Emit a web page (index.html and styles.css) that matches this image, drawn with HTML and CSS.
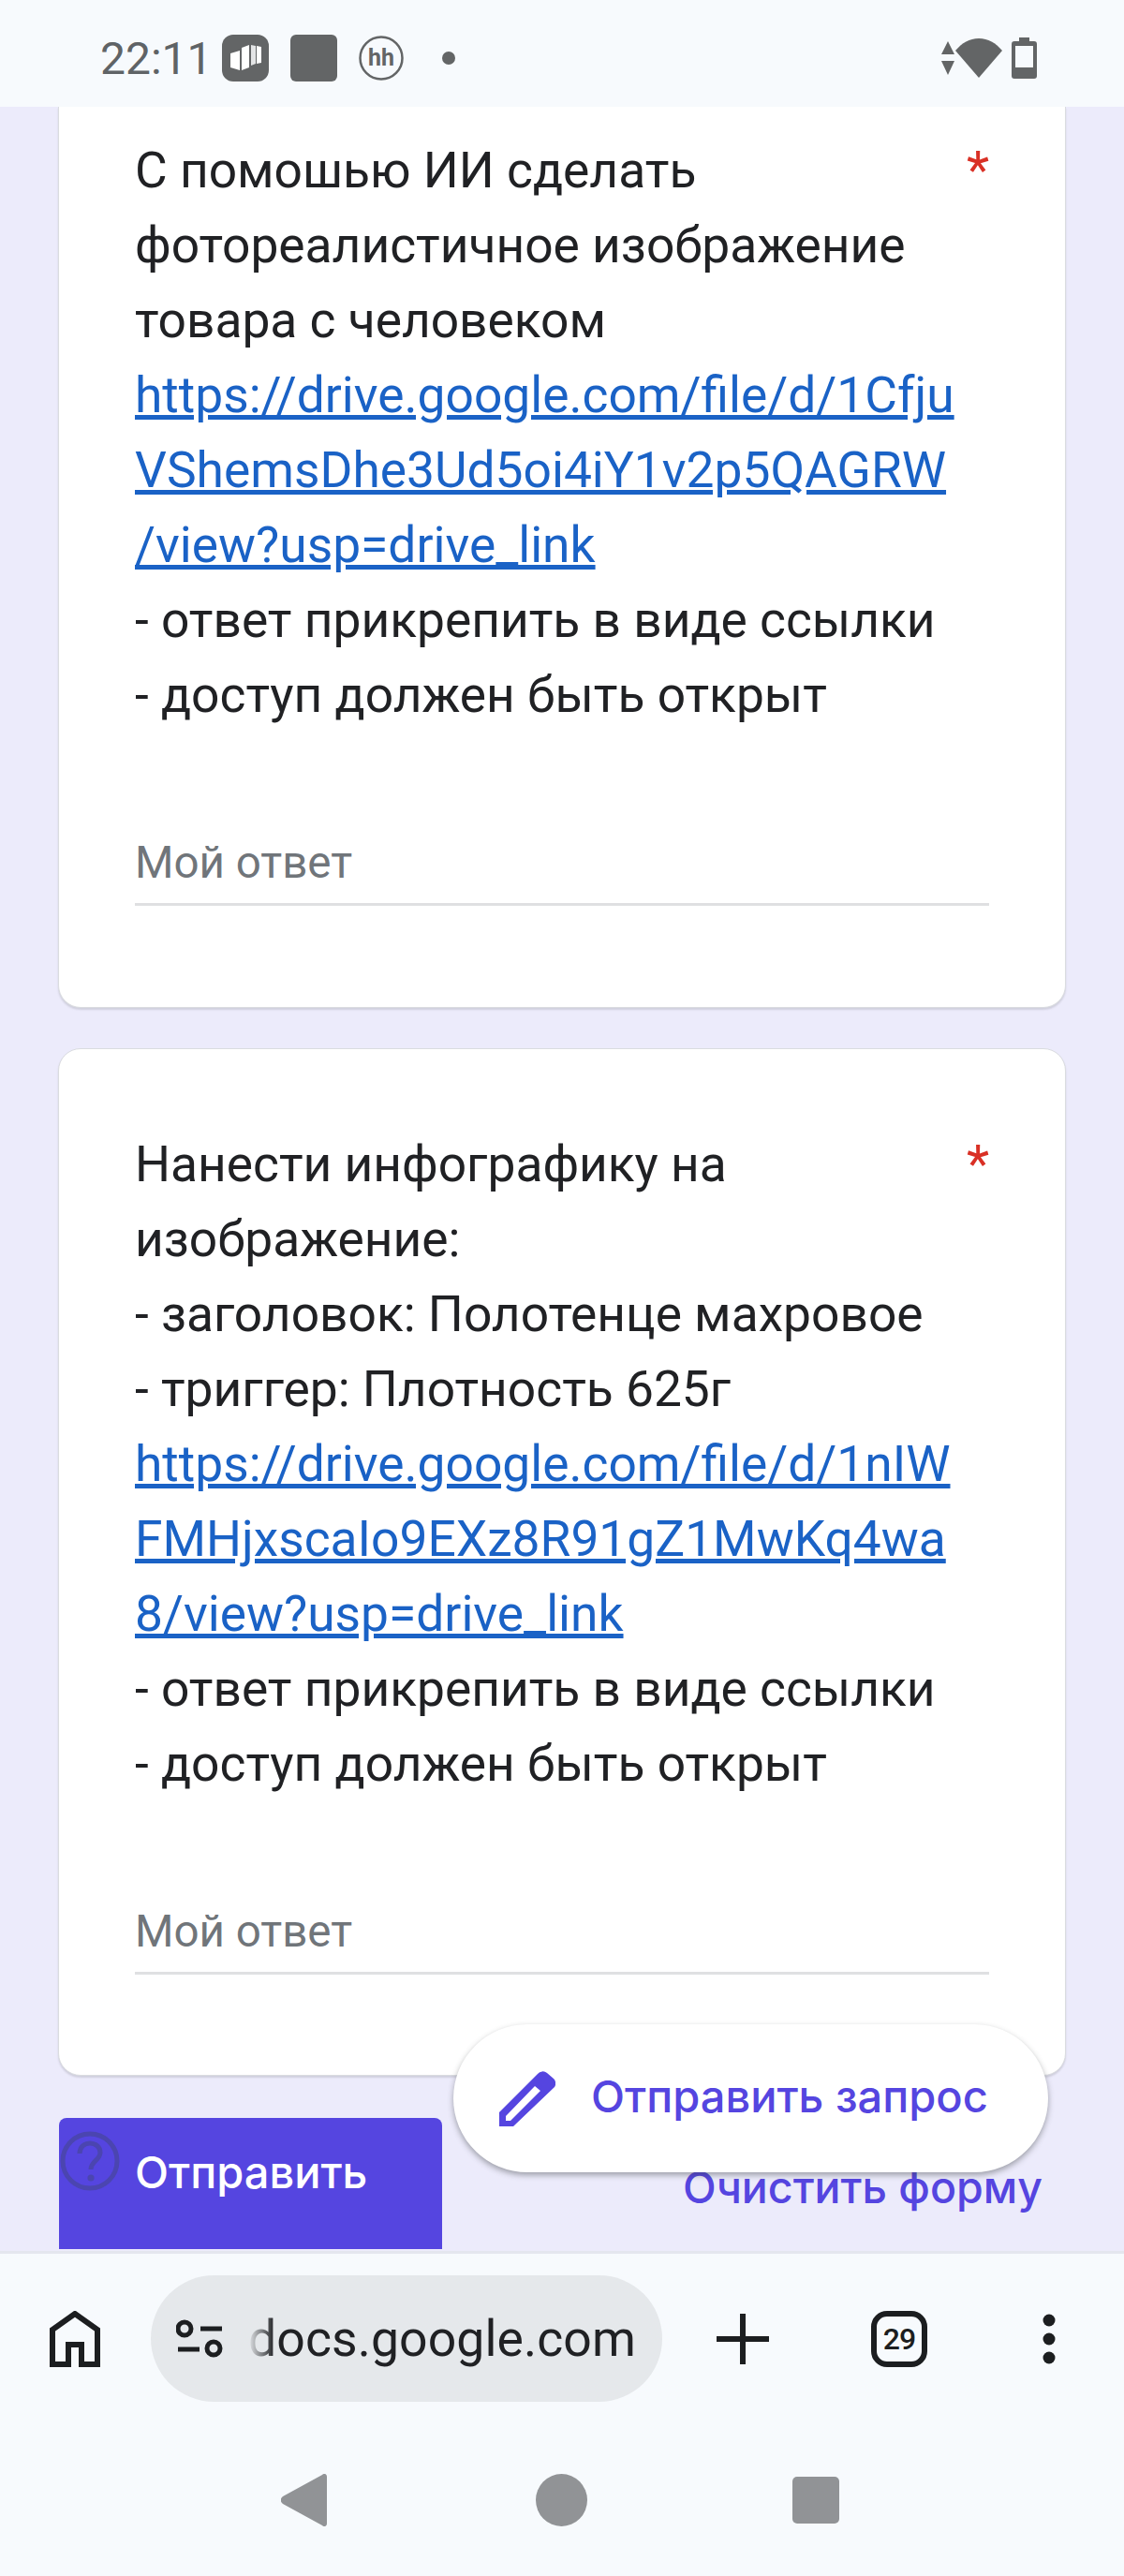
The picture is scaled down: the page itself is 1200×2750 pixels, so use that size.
FILE: index.html
```html
<!DOCTYPE html>
<html lang="ru">
<head>
<meta charset="utf-8">
<title>Форма</title>
<link rel="stylesheet" href="styles.css">
</head>
<body>
<div class="screen">
  <header class="status">
    <span class="time">22:11</span>
    <svg class="s-app first" viewBox="0 0 50 50"><rect width="50" height="50" rx="12" fill="#636566"/><path d="M9 20l10-3v21l-10-3z" fill="#fff"/><path d="M21 14l8-3v24l-8 3z" fill="#fff"/><path d="M31 11l5 1v19l-5 2z" fill="#e4e5e6"/><path d="M37 12l5 1v17l-5 1z" fill="#fff"/></svg>
    <svg class="s-app" viewBox="0 0 50 50"><rect width="50" height="50" rx="6" fill="#636566"/></svg>
    <svg class="s-hh" viewBox="0 0 48 48"><circle cx="24" cy="24" r="22.500" fill="none" stroke="#636566" stroke-width="2.500"/><text x="24" y="32" text-anchor="middle" class="hh-text">hh</text></svg>
    <span class="s-dot"></span>
    <span class="s-right">
      <svg class="s-arrows" viewBox="0 0 16 36"><path d="M8 0l7 14H1zM1 21h14l-7 15z" fill="#636566"/></svg>
      <svg class="s-wifi" viewBox="0 0 50 42"><path d="M0 13C7 5 15 0 25 0s18 5 25 13L25 42z" fill="#636566"/></svg>
      <svg class="s-batt" viewBox="0 0 27 44"><path d="M8 0h11v4h5a3 3 0 0 1 3 3v34a3 3 0 0 1-3 3H3a3 3 0 0 1-3-3V7a3 3 0 0 1 3-3h5z" fill="#636566"/><rect x="4" y="9" width="19" height="23" fill="#f7fafd"/></svg>
    </span>
  </header>

  <main class="form">
    <section class="card card-cut">
      <div class="q">
        <div class="q-text">
          С помошью ИИ сделать<br>
          фотореалистичное изображение<br>
          товара с человеком<br>
          <a class="link" href="#">https://drive.google.com/file/d/1Cfju<br>VShemsDhe3Ud5oi4iY1v2p5QAGRW<br>/view?usp=drive_link</a><br>
          - ответ прикрепить в виде ссылки<br>
          - доступ должен быть открыт
        </div>
        <span class="req">*</span>
      </div>
      <div class="answer">Мой ответ</div>
    </section>

    <section class="card">
      <div class="q">
        <div class="q-text">
          Нанести инфографику на<br>
          изображение:<br>
          - заголовок: Полотенце махровое<br>
          - триггер: Плотность 625г<br>
          <a class="link" href="#">https://drive.google.com/file/d/1nIW<br>FMHjxscaIo9EXz8R91gZ1MwKq4wa<br>8/view?usp=drive_link</a><br>
          - ответ прикрепить в виде ссылки<br>
          - доступ должен быть открыт
        </div>
        <span class="req">*</span>
      </div>
      <div class="answer">Мой ответ</div>
    </section>

    <div class="actions">
      <button class="submit">Отправить</button>
      <span class="clear">Очистить форму</span>
    </div>

    <svg class="help" viewBox="0 0 66 66"><circle cx="33" cy="33" r="29" fill="none" stroke="#4b45b0" stroke-width="5"/><path d="M22 25c0-7 5-11 11-11s11 4 11 10c0 8-10 9-10 18" fill="none" stroke="#4b45b0" stroke-width="5"/><circle cx="34" cy="51" r="3.600" fill="#4b45b0"/></svg>

    <div class="fab">
      <svg class="fab-icon" viewBox="0 0 60 60"><path d="M0 60V45L41 4a7 7 0 0 1 10-1l7 6a7 7 0 0 1 1 9L15 60zM7 49v5h5l32-32-6-5z" fill="#5545e0" fill-rule="evenodd"/></svg>
      <span class="fab-label">Отправить запрос</span>
    </div>
  </main>

  <footer class="toolbar">
    <svg class="t-home" viewBox="0 0 54 60"><path d="M3 57V20L27 3l24 17v37H34V36H20v21z" fill="none" stroke="#1c1e20" stroke-width="6"/></svg>
    <div class="pill">
      <svg class="pill-icon" viewBox="0 0 50 44"><g fill="none" stroke="#1c1e20" stroke-width="5"><circle cx="9" cy="11" r="7"/><circle cx="40" cy="32" r="7"/><path d="M26 11h23M2 33h23"/></g></svg>
      <span class="url">docs.google.com</span>
    </div>
    <svg class="t-plus" viewBox="0 0 56 54"><path d="M28 0v54M0 27h56" stroke="#1c1e20" stroke-width="6"/></svg>
    <div class="tabs">29</div>
    <svg class="t-more" viewBox="0 0 14 54"><circle cx="7" cy="7" r="6.500" fill="#1c1e20"/><circle cx="7" cy="27" r="6.500" fill="#1c1e20"/><circle cx="7" cy="47" r="6.500" fill="#1c1e20"/></svg>
  </footer>

  <nav class="navbar">
    <svg class="n-back" viewBox="0 0 50 56"><path d="M49 3v50c0 3-3 4-5 2L2 32c-3-2-3-6 0-8L44 1c2-2 5-1 5 2z" fill="#919396"/></svg>
    <span class="n-home"></span>
    <span class="n-recent"></span>
  </nav>
</div>
</body>
</html>
```

FILE: styles.css
```css
* { box-sizing: border-box; }
html, body { margin: 0; padding: 0; }
body { width: 1200px; height: 2750px; overflow: hidden; font-family: Roboto, sans-serif; background: #f7fafd; }
.screen { width: 1200px; height: 2750px; display: flex; flex-direction: column; }

.status { height: 114px; flex: none; background: #f7fafd; display: flex; align-items: center; padding: 10px 93px 0 107px; }
.time { font-size: 48px; color: #5f6366; width: 116px; flex: none; }
.s-app { width: 50px; height: 50px; margin-right: 23px; }
.s-app.first { margin-left: 14px; }
.s-hh { width: 48px; height: 48px; margin-right: 41px; }
.hh-text { font: 700 25px Roboto, sans-serif; fill: #636566; }
.s-dot { width: 14px; height: 14px; border-radius: 50%; background: #636566; }
.s-right { margin-left: auto; display: flex; align-items: center; }
.s-arrows { width: 16px; height: 36px; }
.s-wifi { width: 50px; height: 42px; margin-right: 10px; }
.s-batt { width: 27px; height: 44px; }

.form { flex: none; height: 2289px; background: #ecebfb; padding: 0 62px; position: relative; overflow: hidden; }
.card { background: #fff; border: 1px solid #dadce0; border-radius: 24px; padding: 83px 81px 0; box-shadow: 0 2px 2px rgba(60,64,67,.16); margin-bottom: 45px; height: 1097px; }
.card-cut { border-top: 0; border-radius: 0 0 24px 24px; padding-top: 28px; height: 962px; margin-bottom: 43px; }
.q { display: flex; justify-content: space-between; }
.q-text { font-size: 53.3px; line-height: 80px; color: #202124; white-space: nowrap; }
.link { color: #1a62c6; text-decoration: underline; }
.req { font-size: 56px; line-height: 80px; color: #d93025; }
.answer { margin-top: 107px; height: 78px; line-height: 64px; font-size: 47.500px; color: #70757a; border-bottom: 3px solid #dfe0e2; }

.actions { display: flex; justify-content: space-between; margin: 2px 0 0 1px; }
.submit { width: 409px; height: 140px; border: 0; border-radius: 8px 8px 0 0; background: #5545e0; color: #fff; font: 500 47px Inter, Roboto, sans-serif; text-align: left; padding: 0 0 26px 81px; }
.clear { font: 500 46.500px Inter, Roboto, sans-serif; color: #5545e0; margin: 46px 25px 0 0; }
.help { position: absolute; left: 63px; top: 2160px; width: 66px; height: 66px; }
.fab { position: absolute; left: 484px; top: 2047px; width: 635px; height: 158px; background: #fff; border-radius: 79px; box-shadow: 0 3px 6px rgba(60,64,67,.45); display: flex; align-items: center; padding: 0 0 6px 49px; }
.fab-icon { width: 60px; height: 60px; margin: 6px 38px 0 0; }
.fab-label { font: 500 47px Inter, Roboto, sans-serif; color: #5545e0; white-space: nowrap; }

.toolbar { flex: none; height: 210px; background: #f7fafd; border-top: 3px solid #e4e6ee; display: flex; align-items: center; padding: 0 0 26px 53px; }
.t-home { width: 54px; height: 60px; }
.pill { width: 546px; height: 135px; margin-left: 54px; background: #e5e8eb; border-radius: 68px; display: flex; align-items: center; padding-left: 27px; flex: none; }
.pill-icon { width: 50px; height: 44px; margin-right: 27px; }
.url { font-size: 53.500px; letter-spacing: .1px; color: #202124; -webkit-mask-image: linear-gradient(90deg, transparent 0, #000 28px); mask-image: linear-gradient(90deg, transparent 0, #000 28px); }
.t-plus { width: 56px; height: 54px; margin-left: 58px; }
.tabs { width: 60px; height: 60px; margin-left: 109px; border: 6px solid #1c1e20; border-radius: 17px; font-size: 32px; font-weight: 500; letter-spacing: -1px; display: flex; align-items: center; justify-content: center; color: #1c1e20; }
.t-more { width: 14px; height: 54px; margin-left: 123px; }

.navbar { flex: 1; background: #f7fafd; display: flex; align-items: center; padding: 0 0 26px 300px; }
.n-back { width: 50px; height: 56px; }
.n-home { width: 55px; height: 56px; border-radius: 50%; background: #919396; margin-left: 222px; }
.n-recent { width: 50px; height: 50px; border-radius: 5px; background: #919396; margin-left: 219px; }
```
